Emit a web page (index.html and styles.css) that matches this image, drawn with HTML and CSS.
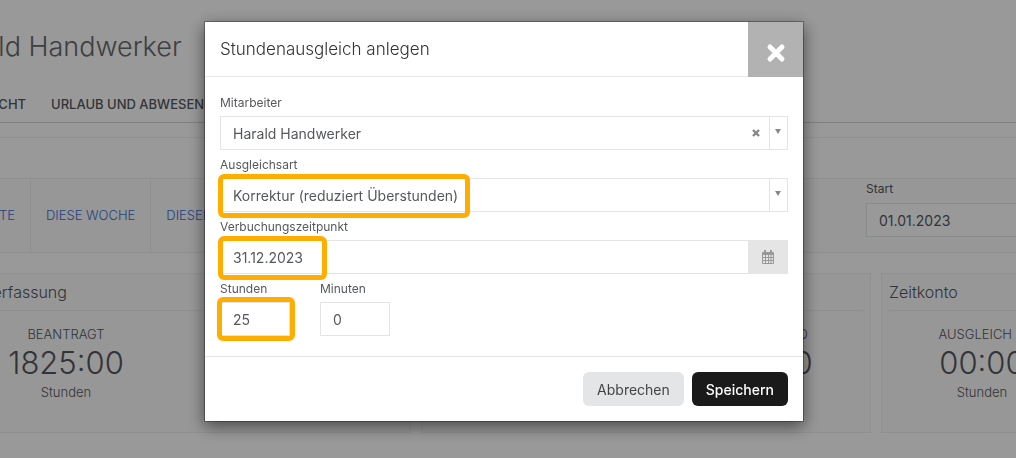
FILE: index.html
```html
<!DOCTYPE html>
<html lang="de">
<head>
<meta charset="utf-8">
<title>Stundenausgleich anlegen</title>
<link rel="stylesheet" href="styles.css">
</head>
<body>
<main class="page">
  <h1 class="page-title">Harald Handwerker</h1>
  <nav class="tabs">
    <a href="#uebersicht">ÜBERSICHT</a>
    <a href="#urlaub">URLAUB UND ABWESENHEIT</a>
  </nav>
  <section class="panel">
    <div class="filter">
      <div class="ranges">
        <a href="#heute">HEUTE</a>
        <a href="#woche">DIESE WOCHE</a>
        <a href="#monat">DIESER MONAT</a>
      </div>
      <div class="start">
        <label for="start">Start</label>
        <input id="start" type="text" value="01.01.2023">
      </div>
    </div>
    <div class="cards">
      <article class="card">
        <h2>Zeiterfassung</h2>
        <div class="stats stats-wide">
          <div class="stat"><span>BEANTRAGT</span><strong>1825:00</strong><span>Stunden</span></div>
        </div>
      </article>
      <article class="card">
        <h2>Urlaub</h2>
        <div class="stats stats-end">
          <div class="stat"><span>RESTSALDO</span><strong>00:00</strong><span>Stunden</span></div>
        </div>
      </article>
      <article class="card">
        <h2>Zeitkonto</h2>
        <div class="stats">
          <div class="stat"><span>AUSGLEICH O</span><strong>00:00</strong><span>Stunden</span></div>
        </div>
      </article>
    </div>
  </section>
</main>

<div class="overlay">
  <form class="modal" role="dialog" aria-labelledby="modal-title">
    <header class="modal-header">
      <h2 id="modal-title">Stundenausgleich anlegen</h2>
      <button class="close" type="button" aria-label="Schließen">
        <svg width="20" height="20" viewBox="0 0 20 20"><path d="M4 4 16 16M16 4 4 16" stroke="currentColor" stroke-width="5" stroke-linecap="round"/></svg>
      </button>
    </header>
    <div class="modal-body">
      <div class="field">
        <label for="employee">Mitarbeiter</label>
        <div class="control">
          <select id="employee"><option>Harald Handwerker</option></select>
          <button class="clear" type="button" aria-label="Leeren">
            <svg width="8" height="8" viewBox="0 0 8 8"><path d="M1 1 7 7M7 1 1 7" stroke="currentColor" stroke-width="2.4"/></svg>
          </button>
          <span class="arrow"><svg width="6" height="5" viewBox="0 0 6 5"><path d="M0 0H6L3 5Z" fill="currentColor"/></svg></span>
        </div>
      </div>
      <div class="field">
        <label for="kind">Ausgleichsart</label>
        <div class="control">
          <select id="kind"><option>Korrektur (reduziert Überstunden)</option></select>
          <span class="arrow"><svg width="6" height="5" viewBox="0 0 6 5"><path d="M0 0H6L3 5Z" fill="currentColor"/></svg></span>
          <span class="mark mark-kind"></span>
        </div>
      </div>
      <div class="field">
        <label for="date">Verbuchungszeitpunkt</label>
        <div class="control">
          <input id="date" type="text" value="31.12.2023">
          <button class="calendar" type="button" aria-label="Kalender öffnen">
            <svg width="14" height="15" viewBox="0 0 14 15"><path fill="currentColor" fill-rule="evenodd" d="M3 0H5V2H9V0H11V2H12Q13 2 13 3V13Q13 14 12 14H2Q1 14 1 13V3Q1 2 2 2H3ZM2 5V7H4V5ZM5 5V7H7V5ZM8 5V7H9.500V5ZM10.500 5V7H12V5ZM2 8V10H4V8ZM5 8V10H7V8ZM8 8V10H9.500V8ZM10.500 8V10H12V8ZM2 11V13H4V11ZM5 11V13H7V11ZM8 11V13H9.500V11ZM10.500 11V13H12V11Z"/></svg>
          </button>
          <span class="mark mark-date"></span>
        </div>
      </div>
      <div class="row">
        <div class="field">
          <label for="hours">Stunden</label>
          <div class="control">
            <input id="hours" type="text" value="25">
            <span class="mark mark-hours"></span>
          </div>
        </div>
        <div class="field">
          <label for="minutes">Minuten</label>
          <div class="control"><input id="minutes" type="text" value="0"></div>
        </div>
      </div>
    </div>
    <footer class="modal-footer">
      <button class="btn" type="button">Abbrechen</button>
      <button class="btn btn-primary" type="submit">Speichern</button>
    </footer>
  </form>
</div>
</body>
</html>
```

FILE: styles.css
```css
* { box-sizing: border-box; }

body {
  margin: 0;
  overflow: hidden;
  background: #fff;
  color: #55585c;
  font-family: Inter, "Liberation Sans", sans-serif;
  font-size: 14px;
}

h1, h2 { margin: 0; font-weight: 300; }
a { text-decoration: none; }
input, select, button { font: inherit; color: inherit; }
svg { display: block; fill: none; }

.page { margin-left: -61px; padding-top: 28px; white-space: nowrap; }
.page-title { padding-bottom: 29px; color: #676a6c; font-size: 27px; line-height: 38px; }

.tabs {
  display: flex;
  gap: 25px;
  padding: 0 0 9px 13px;
  border-bottom: 1px solid #d5d5d5;
  font-size: 13px;
  font-weight: 500;
  line-height: 18px;
}
.tabs a { color: #55585c; }

.panel { margin-top: 14px; padding: 40px 0 0 18px; border-top: 1px solid #f2f2f2; }

.filter {
  display: flex;
  justify-content: space-between;
  height: 75px;
  border: solid #efefef;
  border-width: 1px 0;
  background: #fcfcfc;
}
.ranges { display: flex; }
.ranges a {
  padding: 0 15px;
  border-right: 1px solid #efefef;
  color: #3a6fd8;
  font-size: 13px;
  font-weight: 300;
  line-height: 73px;
}
.start { width: 150px; }
.start label { display: block; padding-top: 1px; font-size: 12px; line-height: 18px; }
.start input {
  width: 200px;
  height: 34px;
  margin-top: 5px;
  padding: 0 12px;
  border: 1px solid #e5e6e7;
  background: #fff;
}

.cards {
  display: grid;
  grid-template-columns: 454px 450px 450px;
  gap: 10px;
  margin-top: 20px;
}
.card { height: 160px; padding: 0 7px; border: 1px solid #f0f0f0; background: #fcfcfc; }
.card h2 { border-bottom: 1px solid #efefef; font-size: 16px; line-height: 36px; }
.stats { display: flex; padding: 13px 31px; }
.stats-wide { padding-left: 39px; }
.stats-end { justify-content: flex-end; }
.stat { width: 124px; font-size: 13px; font-weight: 300; line-height: 20px; text-align: center; }
.stat span, .stat strong { display: block; }
.stat strong { font-size: 31px; font-weight: 300; line-height: 38px; }

.overlay {
  position: fixed;
  inset: 0;
  display: flex;
  align-items: flex-start;
  justify-content: center;
  padding: 21px 8px 0 0;
  background: rgba(0, 0, 0, .4);
}
.modal {
  width: 600px;
  border: 1px solid rgba(0, 0, 0, .3);
  background: #fff;
  background-clip: padding-box;
  box-shadow: 0 5px 15px rgba(0, 0, 0, .5);
}
.modal-header { display: flex; justify-content: space-between; border-bottom: 1px solid #e9e9e9; }
.modal-header h2 { padding-left: 15px; color: #333; font-size: 17px; line-height: 54px; }
.close {
  display: grid;
  place-items: center;
  width: 55px;
  height: 55px;
  margin-bottom: -1px;
  padding: 6px 0 0;
  border: 0;
  background: #b2b2b2;
  color: #fff;
}

.modal-body { padding: 16px 15px 20px; }
.field label { display: block; padding-bottom: 4px; font-size: 12px; line-height: 19px; }
.field + .field { margin-top: 5px; }
.control { position: relative; display: flex; height: 34px; border: 1px solid #e3e4e5; }
.control select, .control input {
  flex: 1;
  min-width: 0;
  padding: 0 12px;
  border: 0;
  background: none;
  appearance: none;
}
.clear { width: 26px; padding: 0 9px; border: 0; background: none; color: #888; }
.arrow { width: 18px; padding: 12px 5px; border-left: 1px solid #e3e4e5; color: #888; }
.calendar {
  display: grid;
  place-items: center;
  width: 40px;
  margin: -1px;
  padding: 0;
  border: 0;
  background: #e5e5e5;
  color: #999;
}
.row { display: flex; gap: 30px; margin-top: 5px; }
.row .field { width: 70px; margin-top: 0; }

/* Highlight frames drawn over the fields. */
.mark { position: absolute; border: 5px solid #ffad00; border-radius: 6px; pointer-events: none; }
.mark-kind { inset: -5px auto -7px -3px; width: 252px; }
.mark-date { inset: -5px auto -7px -3px; width: 109px; }
.mark-hours { inset: -6px -6px -6px -4px; }

.modal-footer {
  display: flex;
  justify-content: flex-end;
  gap: 8px;
  padding: 15px;
  border-top: 1px solid #e3e4e5;
}
.btn {
  height: 34px;
  padding: 0 14px;
  border: 0;
  border-radius: 6px;
  background: #e4e5e7;
  color: #444;
}
.btn-primary { background: #1a1a1a; color: #fff; font-weight: 500; }
```
